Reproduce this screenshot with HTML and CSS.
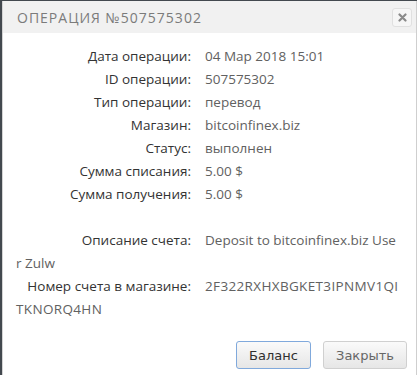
FILE: index.html
```html
<!DOCTYPE html>
<html lang="ru">
<head>
  <meta charset="UTF-8">
  <title>Операция</title>
  <link rel="stylesheet" href="styles.css">
</head>
<body>
  <div class="dialog">
    <div class="dialog-title">
      <span class="title-text">Операция №507575302</span>
      <button class="close-btn" title="Закрыть">
        <svg width="9" height="9" viewBox="0 0 9 9">
          <path d="M1.5 1.5 L7.5 7.5 M7.5 1.5 L1.5 7.5" stroke="#8a8a8a" stroke-width="2.2" stroke-linecap="round"/>
        </svg>
      </button>
    </div>

    <div class="dialog-content">
      <div class="row"><span class="label">Дата операции:</span><span class="value">04 Мар 2018 15:01</span></div>
      <div class="row"><span class="label">ID операции:</span><span class="value">507575302</span></div>
      <div class="row"><span class="label">Тип операции:</span><span class="value">перевод</span></div>
      <div class="row"><span class="label">Магазин:</span><span class="value">bitcoinfinex.biz</span></div>
      <div class="row"><span class="label">Статус:</span><span class="value">выполнен</span></div>
      <div class="row"><span class="label">Сумма списания:</span><span class="value">5.00 $</span></div>
      <div class="row"><span class="label">Сумма получения:</span><span class="value">5.00 $</span></div>
      <div class="row empty"></div>
      <div class="row"><span class="label">Описание счета:</span><span class="value">Deposit to bitcoinfinex.biz User Zulw</span></div>
      <div class="row"><span class="label">Номер счета в магазине:</span><span class="value code">2F322RXHXBGKET3IPNMV1QITKNORQ4HN</span></div>
    </div>

    <div class="dialog-buttons">
      <button class="btn btn-focus">Баланс</button>
      <button class="btn btn-close">Закрыть</button>
    </div>
  </div>
</body>
</html>
```

FILE: styles.css
```css
* {
  margin: 0;
  padding: 0;
  box-sizing: border-box;
}

body {
  height: 100vh;
  background: #43494f;
  padding: 1px 0 0 2px;
  overflow: hidden;
  font-family: 'Open Sans', sans-serif;
}

.dialog {
  height: 100%;
  background: #fff;
  border-left: 1px solid #d4d4d4;
  border-right: 1px solid #cfcfcf;
  display: flex;
  flex-direction: column;
}

.dialog-title {
  height: 32px;
  background: #f1f1f1;
  display: flex;
  align-items: center;
  justify-content: space-between;
  padding: 0 4px 0 14px;
}

.title-text {
  color: #7b7b7b;
  font-size: 14px;
  letter-spacing: 1px;
  text-transform: uppercase;
}

.close-btn {
  width: 20px;
  height: 19px;
  border: 1px solid #e0e0e0;
  border-radius: 3px;
  background: #f6f6f6;
  display: flex;
  align-items: center;
  justify-content: center;
  cursor: pointer;
}

.dialog-content {
  flex: 1;
  padding: 12px 17px 0 13px;
}

.row {
  font-size: 13.5px;
  line-height: 23px;
  word-break: break-all;
}

.row.empty {
  height: 23px;
}

.label {
  display: inline-block;
  width: 175px;
  text-align: right;
  margin-right: 14px;
  color: #333;
  word-break: normal;
}

.value {
  color: #616161;
}

.value.code {
  letter-spacing: 0.35px;
}

.dialog-buttons {
  display: flex;
  justify-content: flex-end;
  gap: 12px;
  padding: 0 9px 6px 0;
}

.btn {
  height: 28px;
  padding: 0 12px;
  font-family: 'DejaVu Sans', sans-serif;
  font-size: 13px;
  border: 1px solid #d0d0d0;
  border-radius: 3px;
  background: linear-gradient(#fafafa, #e6e6e6);
  cursor: pointer;
}

.btn-focus {
  width: 75px;
  color: #2f2f2f;
  border-color: #80a9dc;
}

.btn-close {
  width: 84px;
  color: #666;
}
```
